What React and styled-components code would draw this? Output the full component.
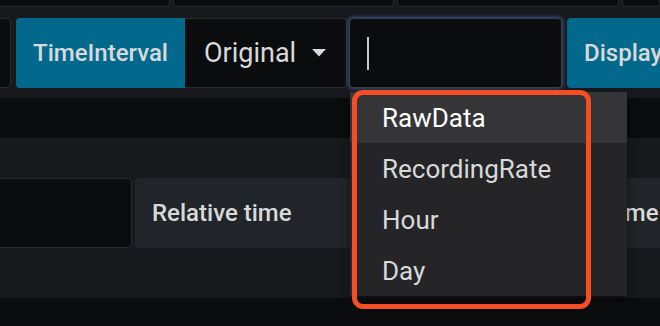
import React from "react";
import styled, { createGlobalStyle } from "styled-components";

const GlobalStyles = createGlobalStyle`
  html, body {
    margin: 0;
    padding: 0;
    background: #0b0c0e;
  }
  body {
    font-family: Roboto, "Liberation Sans", sans-serif;
    color: #d8d9da;
  }
`;

const Page = styled.div`
  width: 660px;
  height: 326px;
  overflow: hidden;
  background: #18191c;
  display: flex;
  flex-direction: column;
`;

const TopRow = styled.div`
  display: flex;
  gap: 3px;
  height: 7px;
  flex-shrink: 0;
`;

const TopField = styled.div`
  width: ${(p) => (p.$w ? `${p.$w}px` : "auto")};
  flex: ${(p) => (p.$w ? "0 0 auto" : "1")};
  margin-left: ${(p) => (p.$first ? "-4px" : "0")};
  background: #0b0c0e;
  border: 1px solid #27282c;
  border-top: none;
  border-radius: 0 0 4px 4px;
`;

const FieldRow = styled.div`
  display: flex;
  align-items: stretch;
  height: 70px;
  margin-top: ${(p) => p.$top}px;
  flex-shrink: 0;
`;

const InputBox = styled.div`
  position: relative;
  box-sizing: border-box;
  width: ${(p) => p.$w}px;
  flex: 0 0 auto;
  margin-left: ${(p) => p.$ml || 0}px;
  margin-right: ${(p) => p.$mr || 0}px;
  background: #0b0c0e;
  border: 1px solid ${(p) => (p.$focused ? "#3a3f4c" : "#2a2b2f")};
  border-radius: 4px;
  display: flex;
  align-items: center;
  padding-left: ${(p) => (p.$focused ? "17px" : "0")};
  box-shadow: ${(p) =>
    p.$focused ? "0 0 4px 1px rgba(87, 140, 230, 0.5)" : "none"};
`;

const Label = styled.div`
  box-sizing: border-box;
  flex: 0 0 auto;
  width: ${(p) => (p.$w ? `${p.$w}px` : "auto")};
  margin-right: ${(p) => p.$mr || 0}px;
  display: flex;
  align-items: center;
  padding: 0 17px;
  font-size: 24px;
  font-weight: 500;
  white-space: nowrap;
  color: #d8d9da;
  background: ${(p) => (p.$tone === "blue" ? "#03698c" : "#212428")};
  border-radius: ${(p) => (p.$joined ? "4px 0 0 4px" : "4px")};
`;

const SelectBox = styled.div`
  box-sizing: border-box;
  flex: 0 0 auto;
  width: ${(p) => p.$w}px;
  margin-right: ${(p) => p.$mr || 0}px;
  display: flex;
  align-items: center;
  padding-left: 19px;
  background: #0b0c0e;
  border: 1px solid #2a2b2f;
  border-left: none;
  border-radius: 0 4px 4px 0;
  font-size: 27px;
  color: #d8d9da;
  gap: 16px;
`;

const Caret = styled.span`
  display: block;
  width: 2px;
  height: 33px;
  background: #c8c9cc;
`;

const Band = styled.div`
  height: ${(p) => p.$h}px;
  margin-top: ${(p) => p.$top}px;
  background: #0b0c0e;
  flex-shrink: 0;
`;

const Menu = styled.div`
  position: absolute;
  left: 0;
  top: calc(100% + 5px);
  width: 277px;
  background: #252528;
  box-shadow: 0 4px 8px rgba(0, 0, 0, 0.5);
  z-index: 10;
`;

const Option = styled.div`
  height: 51px;
  display: flex;
  align-items: center;
  padding-left: 32px;
  font-size: 26px;
  color: ${(p) => (p.$active ? "#ffffff" : "#d8d9da")};
  background: ${(p) => (p.$active ? "#353538" : "transparent")};
`;

const Highlight = styled.div`
  position: absolute;
  left: 2px;
  top: 71px;
  width: 239px;
  height: 219px;
  box-sizing: border-box;
  border: 5px solid #f44e24;
  border-radius: 11px;
  z-index: 11;
  pointer-events: none;
`;

const Arrow = () => (
  <svg width="14" height="8" viewBox="0 0 14 8">
    <path d="M0 0 L14 0 L7 7.5 Z" fill="#d8d9da" />
  </svg>
);

const options = ["RawData", "RecordingRate", "Hour", "Day"];

const App = () => {
  return (
    <>
      <GlobalStyles />
      <Page>
        <TopRow>
          <TopField $first $w={172} />
          <TopField $w={219} />
          <TopField $w={220} />
          <TopField />
        </TopRow>

        <FieldRow $top={11}>
          <InputBox $w={16} $ml={-5} $mr={5} />
          <Label $tone="blue" $joined>TimeInterval</Label>
          <SelectBox $w={162} $mr={2}>
            Original
            <Arrow />
          </SelectBox>
          <InputBox $w={213} $mr={5} $focused>
            <Caret />
            <Menu>
              {options.map((item, index) => (
                <Option key={index} $active={index === 0}>
                  {item}
                </Option>
              ))}
            </Menu>
            <Highlight />
          </InputBox>
          <Label $tone="blue">Display</Label>
        </FieldRow>

        <Band $top={10} $h={40} />

        <FieldRow $top={40}>
          <InputBox $w={137} $ml={-5} $mr={3} />
          <Label $w={265} $mr={3}>Relative time</Label>
          <InputBox $w={181} $mr={3} />
          <Label>Time shift</Label>
        </FieldRow>

        <Band $top={50} $h={40} />
      </Page>
    </>
  );
};

export default App;
